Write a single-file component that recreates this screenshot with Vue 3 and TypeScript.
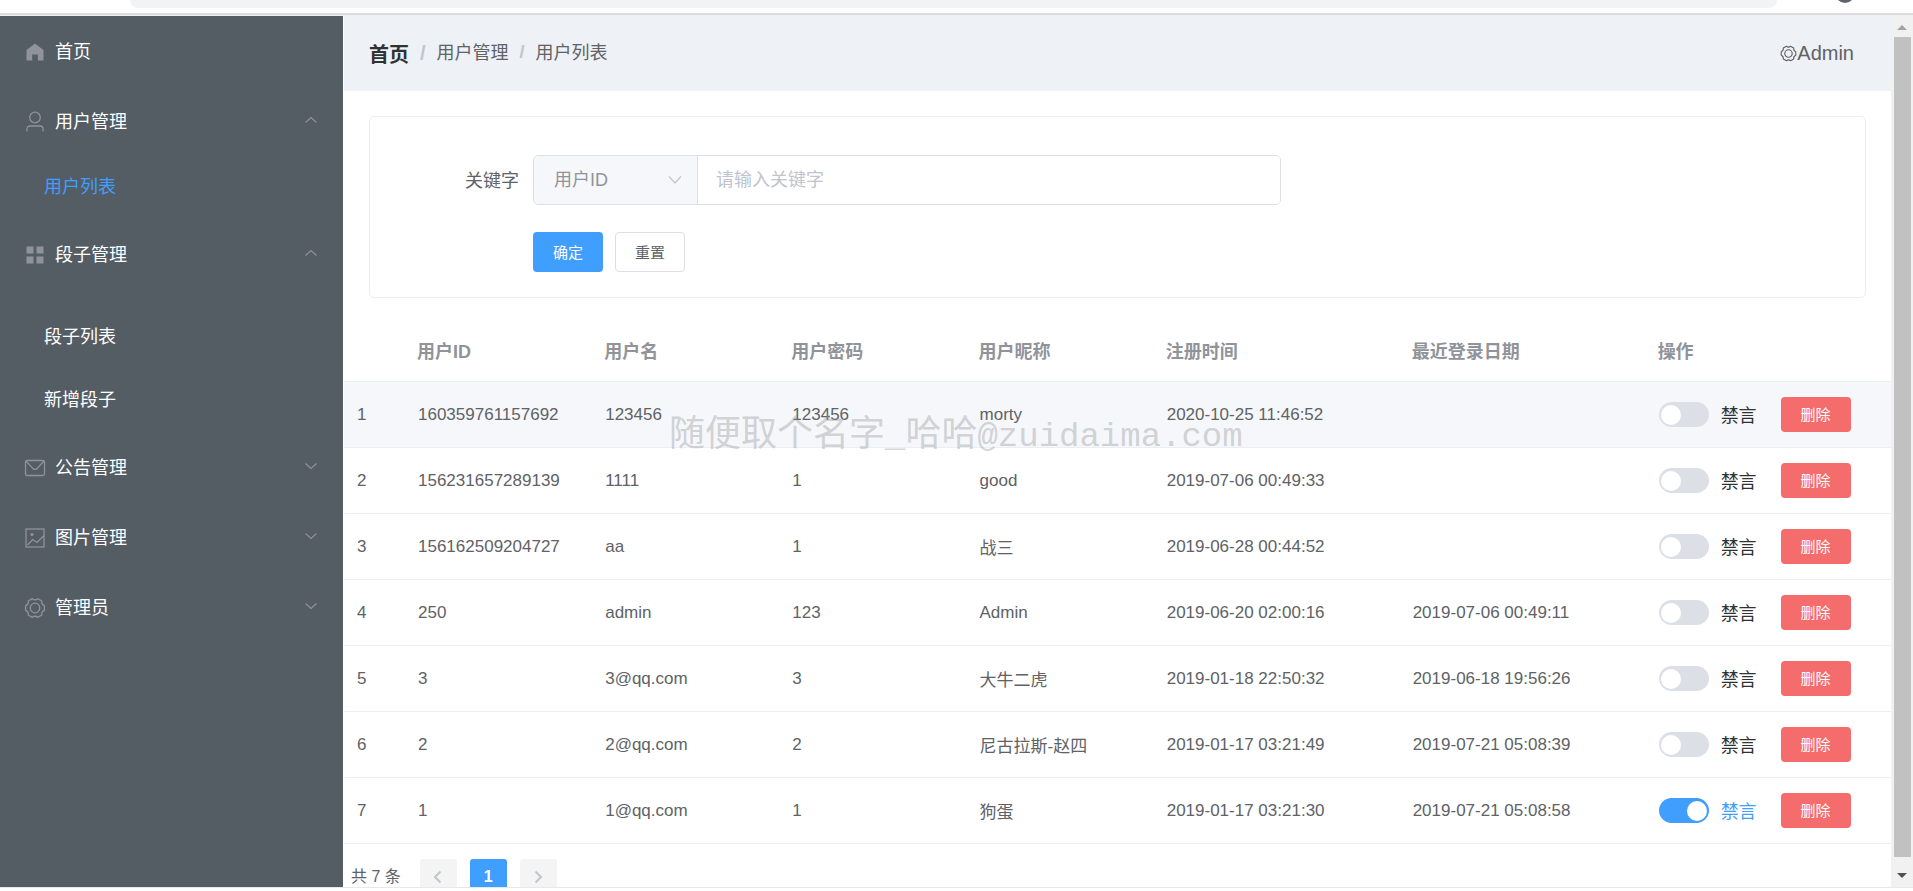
<script setup lang="ts">
import { ref } from 'vue'

interface MenuItem {
  title: string
  icon: 'home' | 'user' | 'grid' | 'mail' | 'picture' | 'gear'
  open?: boolean
  expandable?: boolean
  grouped?: boolean
  children?: { title: string; active?: boolean }[]
}

interface UserRow {
  id: string
  name: string
  password: string
  nickname: string
  registered: string
  lastLogin: string
  muted: boolean
}

const gearPath =
  'M20.4 8.65V13.35Q17.24 14.6 17.74 17.98L13.67 20.32Q11 18.2 8.33 20.32L4.26 17.98Q4.76 14.6 1.6 13.35V8.65Q4.76 7.4 4.26 4.02L8.33 1.68Q11 3.8 13.67 1.68L17.74 4.02Q17.24 7.4 20.4 8.65z'

const menu = ref<MenuItem[]>([
  { title: '首页', icon: 'home' },
  { title: '用户管理', icon: 'user', expandable: true, open: true, children: [{ title: '用户列表', active: true }] },
  {
    title: '段子管理',
    icon: 'grid',
    expandable: true,
    open: true,
    grouped: true,
    children: [{ title: '段子列表' }, { title: '新增段子' }],
  },
  { title: '公告管理', icon: 'mail', expandable: true },
  { title: '图片管理', icon: 'picture', expandable: true },
  { title: '管理员', icon: 'gear', expandable: true },
])

const headings = ['', '用户ID', '用户名', '用户密码', '用户昵称', '注册时间', '最近登录日期', '操作']

const rows = ref<UserRow[]>([
  { id: '160359761157692', name: '123456', password: '123456', nickname: 'morty', registered: '2020-10-25 11:46:52', lastLogin: '', muted: false },
  { id: '156231657289139', name: '1111', password: '1', nickname: 'good', registered: '2019-07-06 00:49:33', lastLogin: '', muted: false },
  { id: '156162509204727', name: 'aa', password: '1', nickname: '战三', registered: '2019-06-28 00:44:52', lastLogin: '', muted: false },
  { id: '250', name: 'admin', password: '123', nickname: 'Admin', registered: '2019-06-20 02:00:16', lastLogin: '2019-07-06 00:49:11', muted: false },
  { id: '3', name: '3@qq.com', password: '3', nickname: '大牛二虎', registered: '2019-01-18 22:50:32', lastLogin: '2019-06-18 19:56:26', muted: false },
  { id: '2', name: '2@qq.com', password: '2', nickname: '尼古拉斯-赵四', registered: '2019-01-17 03:21:49', lastLogin: '2019-07-21 05:08:39', muted: false },
  { id: '1', name: '1@qq.com', password: '1', nickname: '狗蛋', registered: '2019-01-17 03:21:30', lastLogin: '2019-07-21 05:08:58', muted: true },
])

const field = ref('id')
const keyword = ref('')

function reset() {
  field.value = 'id'
  keyword.value = ''
}

function remove(index: number) {
  rows.value.splice(index, 1)
}
</script>

<template>
  <div class="window">
    <div class="chrome" aria-hidden="true">
      <div class="address"></div>
      <div class="avatar-slot"><span class="avatar"></span></div>
    </div>

    <div class="frame">
      <nav class="sidebar">
        <div v-for="item in menu" :key="item.title" class="menu-group">
          <button class="menu-item" type="button" :aria-expanded="item.expandable ? !!item.open : undefined" @click="item.open = !item.open">
            <svg class="menu-icon" viewBox="0 0 22 22" aria-hidden="true">
              <path v-if="item.icon === 'home'" fill="currentColor" d="M11 2.5 19.5 9v10.5h-5.7v-6H8.2v6H2.5V9z" />
              <g v-else-if="item.icon === 'user'" fill="none" stroke="currentColor" stroke-width="1.3">
                <circle cx="11" cy="6.5" r="5.3" />
                <path d="M2.9 20.5v-2.2c0-2 1.2-3.3 3.2-3.3h9.8c2 0 3.2 1.3 3.2 3.3v2.2" />
              </g>
              <g v-else-if="item.icon === 'grid'" fill="currentColor">
                <rect x="2.5" y="2.5" width="7" height="7" />
                <rect x="12.5" y="2.5" width="7" height="7" />
                <rect x="2.5" y="12.5" width="7" height="7" />
                <rect x="12.5" y="12.5" width="7" height="7" />
              </g>
              <g v-else-if="item.icon === 'mail'" fill="none" stroke="currentColor" stroke-width="1.3">
                <rect x="1.5" y="3.5" width="19" height="15" rx="1.5" />
                <path d="m2 4 6.8 7.4c1.5 1.4 2.9 1.4 4.4 0L20 4" />
              </g>
              <g v-else-if="item.icon === 'picture'" fill="none" stroke="currentColor" stroke-width="1.3">
                <rect x="2" y="2" width="18" height="18" />
                <circle cx="8" cy="7.5" r="1.6" fill="currentColor" stroke="none" />
                <path d="m3.5 18 5.2-5.5 4.3 3L20 8.5" />
              </g>
              <g v-else fill="none" stroke="currentColor" stroke-width="1.3" stroke-linejoin="round">
                <path :d="gearPath" />
                <circle cx="11" cy="11" r="4.8" />
              </g>
            </svg>
            <span class="menu-title">{{ item.title }}</span>
            <svg v-if="item.expandable" class="menu-arrow" :class="{ open: item.open }" viewBox="0 0 14 14" aria-hidden="true">
              <path d="m1.5 4.5 5.5 5 5.5-5" fill="none" stroke="currentColor" stroke-width="1.1" />
            </svg>
          </button>
          <div v-if="item.open && item.children" class="submenu" :class="{ grouped: item.grouped }">
            <a v-for="child in item.children" :key="child.title" href="#" class="submenu-item" :class="{ active: child.active }">{{ child.title }}</a>
          </div>
        </div>
      </nav>

      <main class="content">
        <header class="header">
          <div class="breadcrumb">
            <a href="#" class="crumb-home">首页</a>
            <span class="slash large">/</span>
            <span class="crumb">用户管理</span>
            <span class="slash">/</span>
            <span class="crumb">用户列表</span>
          </div>
          <button type="button" class="account">
            <svg class="account-icon" viewBox="0 0 22 22" aria-hidden="true">
              <g fill="none" stroke="currentColor" stroke-width="1.5" stroke-linejoin="round">
                <path :d="gearPath" />
                <circle cx="11" cy="11" r="4.8" />
              </g>
            </svg>
            <span>Admin</span>
          </button>
        </header>

        <form class="search" @submit.prevent>
          <div class="form-row">
            <label class="form-label" for="keyword">关键字</label>
            <div class="input-group">
              <div class="select-wrap">
                <select v-model="field" class="select" aria-label="搜索字段">
                  <option value="id">用户ID</option>
                </select>
                <svg class="select-arrow" viewBox="0 0 14 14" aria-hidden="true">
                  <path d="m1 3.5 6 6.5 6-6.5" fill="none" stroke="currentColor" stroke-width="1.2" />
                </svg>
              </div>
              <input id="keyword" v-model="keyword" class="input" type="text" placeholder="请输入关键字" />
            </div>
          </div>
          <div class="form-actions">
            <button type="submit" class="btn primary">确定</button>
            <button type="button" class="btn plain" @click="reset">重置</button>
          </div>
        </form>

        <div class="table-area">
          <table class="table">
            <colgroup>
              <col class="col-index" />
              <col v-for="n in 4" :key="n" class="col-text" />
              <col class="col-date" />
              <col class="col-date" />
              <col />
            </colgroup>
            <thead>
              <tr>
                <th v-for="heading in headings" :key="heading" scope="col">{{ heading }}</th>
              </tr>
            </thead>
            <tbody>
              <tr v-for="(row, index) in rows" :key="row.id" :class="{ hovered: index === 0 }">
                <td>{{ index + 1 }}</td>
                <td>{{ row.id }}</td>
                <td>{{ row.name }}</td>
                <td>{{ row.password }}</td>
                <td>{{ row.nickname }}</td>
                <td>{{ row.registered }}</td>
                <td>{{ row.lastLogin }}</td>
                <td>
                  <div class="actions">
                    <label class="switch" :class="{ on: row.muted }">
                      <input v-model="row.muted" class="switch-input" type="checkbox" role="switch" />
                      <span class="switch-text">禁言</span>
                    </label>
                    <button type="button" class="btn danger" @click="remove(index)">删除</button>
                  </div>
                </td>
              </tr>
            </tbody>
          </table>
          <div class="watermark" aria-hidden="true">随便取个名字<span class="latin">_</span>哈哈<span class="latin">@zuidaima.com</span></div>
        </div>

        <div class="pagination">
          <span class="total">共 7 条</span>
          <button type="button" class="page" disabled aria-label="上一页">
            <svg viewBox="0 0 14 14" aria-hidden="true"><path d="M9.5 1.5 4 7l5.5 5.5" fill="none" stroke="currentColor" stroke-width="2" /></svg>
          </button>
          <button type="button" class="page current" aria-current="page">1</button>
          <button type="button" class="page" disabled aria-label="下一页">
            <svg viewBox="0 0 14 14" aria-hidden="true"><path d="M4.5 1.5 10 7l-5.5 5.5" fill="none" stroke="currentColor" stroke-width="2" /></svg>
          </button>
        </div>
      </main>

      <div class="scrollbar" aria-hidden="true">
        <svg class="scroll-arrow up" viewBox="0 0 10 5"><path d="M0 5h10L5 0z" /></svg>
        <div class="thumb"></div>
        <svg class="scroll-arrow" viewBox="0 0 10 5"><path d="M0 0h10L5 5z" /></svg>
      </div>
    </div>
  </div>
</template>

<style>
html,
body {
  margin: 0;
  overflow: hidden;
  background: #fff;
}
</style>

<style scoped>
.window {
  display: flex;
  flex-direction: column;
  height: 100vh;
  padding-bottom: 3px;
  box-sizing: border-box;
  font-family: "Liberation Sans", "Noto Sans CJK SC", sans-serif;
  font-size: 17px;
  color: #606266;
}

button,
input,
select {
  margin: 0;
  font-family: inherit;
}

button {
  cursor: pointer;
}

a {
  text-decoration: none;
}

.chrome {
  display: flex;
  flex: none;
  height: 13px;
  overflow: hidden;
  border-bottom: 2px solid #dcdce0;
  background: #fff;
}

.address {
  flex: 1;
  height: 8px;
  margin-left: 130px;
  border-radius: 0 0 14px 14px;
  background: #f1f3f4;
}

.avatar-slot {
  width: 136px;
}

.avatar {
  display: block;
  width: 20px;
  height: 20px;
  margin: -17px auto 0;
  border-radius: 50%;
  background: #5f6368;
}

.frame {
  display: flex;
  flex: 1;
  min-height: 0;
  border-top: 1px solid #eef1f6;
  border-bottom: 1px solid #e8e8ec;
}

.sidebar {
  flex: none;
  width: 343px;
  margin-right: 1px;
  background: #545c64;
}

.menu-item {
  display: flex;
  align-items: center;
  width: 100%;
  height: 70px;
  padding: 0 25px 3px 24px;
  border: 0;
  background: none;
  color: #fff;
  font-size: 18px;
  text-align: left;
}

.menu-icon {
  width: 22px;
  height: 22px;
  margin: 5px 9px 0 0;
  color: #909399;
}

.menu-title {
  flex: 1;
}

.menu-arrow {
  width: 14px;
  height: 14px;
  color: #909399;
}

.menu-arrow.open {
  transform: rotate(180deg);
}

.submenu.grouped {
  padding-top: 17px;
}

.submenu-item {
  display: block;
  padding-left: 44px;
  color: #fff;
  font-size: 18px;
  line-height: 63px;
}

.submenu-item.active {
  color: #409eff;
}

.content {
  display: flex;
  flex: 1;
  flex-direction: column;
  min-width: 0;
  overflow: hidden;
}

.header {
  display: flex;
  flex: none;
  align-items: center;
  justify-content: space-between;
  height: 75px;
  padding: 0 37px 0 25px;
  background: #eef1f6;
}

.breadcrumb {
  display: flex;
  align-items: center;
  font-size: 18px;
}

.crumb-home {
  color: #303133;
  font-size: 20px;
  font-weight: 700;
}

.crumb {
  padding-bottom: 5px;
}

.slash {
  margin: 0 11px;
  padding-bottom: 2px;
  color: #c0c4cc;
  font-weight: 700;
}

.slash.large {
  padding-bottom: 0;
  font-size: 20px;
}

.account {
  display: flex;
  align-items: center;
  padding: 0;
  border: 0;
  background: none;
  color: #606266;
  font-size: 20px;
}

.account-icon {
  width: 17px;
  height: 17px;
}

.search {
  flex: none;
  margin: 25px;
  padding: 38px 0 25px;
  border: 1px solid #ebeef2;
  border-radius: 5px;
}

.form-row {
  display: flex;
  align-items: center;
}

.form-label {
  width: 149px;
  margin-right: 14px;
  padding-bottom: 3px;
  font-size: 18px;
  text-align: right;
}

.input-group {
  display: flex;
  width: 50%;
  height: 50px;
  box-sizing: border-box;
  overflow: hidden;
  border: 1px solid #dcdfe6;
  border-radius: 5px;
}

.select-wrap {
  position: relative;
  width: 163px;
  border-right: 1px solid #dcdfe6;
  background: #f5f7fa;
}

.select {
  width: 100%;
  height: 100%;
  padding: 0 40px 0 20px;
  border: 0;
  outline: 0;
  appearance: none;
  background: none;
  color: #909399;
  font-size: 18px;
}

.select-arrow {
  position: absolute;
  top: 17px;
  right: 15px;
  width: 14px;
  height: 14px;
  color: #c0c4cc;
  pointer-events: none;
}

.input {
  flex: 1;
  min-width: 0;
  padding: 0 18px;
  border: 0;
  outline: 0;
  color: #606266;
  font-size: 18px;
}

.input::placeholder {
  color: #c0c4cc;
}

.form-actions {
  display: flex;
  gap: 12px;
  margin: 27px 0 0 163px;
}

.btn {
  width: 70px;
  height: 40px;
  padding: 0 0 2px;
  border: 1px solid transparent;
  border-radius: 4px;
  font-size: 15px;
}

.btn.primary {
  background: #409eff;
  color: #fff;
}

.btn.plain {
  border-color: #dcdfe6;
  background: #fff;
  color: #606266;
}

.btn.danger {
  height: 35px;
  background: #f56c6c;
  color: #fff;
}

.table-area {
  position: relative;
  flex: none;
}

.table {
  width: 100%;
  border-spacing: 0;
  table-layout: fixed;
}

.col-index {
  width: 60px;
}

.col-text {
  width: 12.1%;
}

.col-date {
  width: 15.9%;
}

.table th,
.table td {
  border-bottom: 1px solid #ebeef2;
  text-align: left;
  white-space: nowrap;
}

.table th {
  height: 54px;
  padding: 0 13px 4px;
  color: #909399;
  font-size: 18px;
  font-weight: 700;
}

.table td {
  height: 65px;
  padding: 0 14px;
}

.table td:first-child {
  padding: 0 13px;
}

.hovered td {
  background: #f5f7fa;
}

.actions {
  display: flex;
  align-items: center;
  gap: 24px;
}

.switch {
  display: flex;
  align-items: center;
  gap: 12px;
  color: #303133;
  font-size: 18px;
  cursor: pointer;
}

.switch.on {
  color: #409eff;
}

.switch-text {
  padding-bottom: 2px;
}

.switch-input {
  display: flex;
  width: 50px;
  height: 25px;
  padding: 0 2px;
  box-sizing: border-box;
  align-items: center;
  appearance: none;
  border-radius: 13px;
  background: #dcdfe6;
}

.switch-input::before {
  width: 20px;
  height: 20px;
  border-radius: 50%;
  background: #fff;
  content: "";
}

.switch-input:checked {
  justify-content: flex-end;
  background: #409eff;
}

.watermark {
  position: absolute;
  top: 82px;
  left: 325px;
  color: rgba(150, 150, 150, 0.4);
  font-family: "Noto Sans CJK SC", sans-serif;
  font-size: 36px;
  line-height: 50px;
  white-space: nowrap;
  pointer-events: none;
}

.latin {
  font-family: "Liberation Mono", monospace;
  font-size: 34px;
}

.pagination {
  display: flex;
  flex: none;
  align-items: center;
  gap: 13px;
  padding: 15px 7px;
}

.total {
  margin-right: 6px;
  padding-bottom: 3px;
  font-size: 16px;
}

.page {
  display: flex;
  align-items: center;
  justify-content: center;
  width: 37px;
  height: 35px;
  padding: 0;
  border: 0;
  border-radius: 3px;
  background: #f4f4f5;
  color: #c0c4cc;
  font-size: 16px;
  font-weight: 700;
}

.page svg {
  width: 14px;
  height: 14px;
}

.page.current {
  background: #409eff;
  color: #fff;
}

.scrollbar {
  display: flex;
  flex: none;
  flex-direction: column;
  align-items: center;
  width: 22px;
  padding: 9px 0;
  box-sizing: border-box;
  background: #f1f1f1;
}

.scroll-arrow {
  flex: none;
  width: 10px;
  height: 5px;
  fill: #505050;
}

.scroll-arrow.up {
  fill: #a3a3a3;
}

.thumb {
  flex: 1;
  width: 17px;
  margin: 7px 0 16px;
  background: #c1c1c1;
}
</style>
